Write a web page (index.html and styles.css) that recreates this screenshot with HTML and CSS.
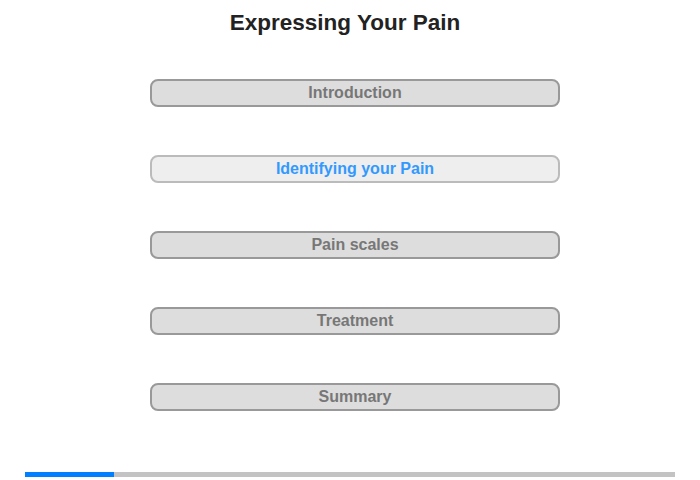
FILE: index.html
```html
<!DOCTYPE html>
<html lang="en">
<head>
  <meta charset="UTF-8">
  <meta name="viewport" content="width=device-width, initial-scale=1.0">
  <title>Expressing Your Pain</title>
  <link rel="stylesheet" href="styles.css">
</head>
<body>
  <h1>Expressing Your Pain</h1>

  <!-- Chapter Menu -->
  <div class="menu">
    <button class="chapter">Introduction</button>
    <button class="chapter active">Identifying your Pain</button>
    <button class="chapter">Pain scales</button>
    <button class="chapter">Treatment</button>
    <button class="chapter">Summary</button>
  </div>

  <!-- Progress -->
  <div class="progress">
    <div class="progress-fill" style="width: 13.7%"></div>
  </div>
</body>
</html>
```

FILE: styles.css
```css
/* General Styling */
body {
  background-color: white;
  font-family: "Liberation Sans", Arial, sans-serif;
  margin: 0;
  padding: 0;
  width: 700px;
  height: 480px;
}

h1 {
  text-align: center;
  font-size: 22.5px;
  font-weight: bold;
  color: #222;
  margin: 0;
  padding: 10px 10px 0 0;
  line-height: 26px;
}

/* Chapter Menu */
.menu {
  display: flex;
  flex-direction: column;
  align-items: center;
  gap: 48px;
  margin-top: 43px;
  padding-left: 10px;
}

.chapter {
  width: 410px;
  height: 28px;
  background-color: #dddddd;
  border: 2px solid #999999;
  border-radius: 8px;
  font-family: "Liberation Sans", Arial, sans-serif;
  font-size: 16px;
  font-weight: bold;
  color: #777777;
  padding: 0;
  cursor: pointer;
}

.chapter.active {
  background-color: #eeeeee;
  border-color: #bbbbbb;
  color: #3399ff;
}

/* Progress Bar */
.progress {
  margin: 61px 25px 0;
  height: 5px;
  background-color: #c3c3c3;
}

.progress-fill {
  height: 100%;
  background-color: #0080ff;
}
```
